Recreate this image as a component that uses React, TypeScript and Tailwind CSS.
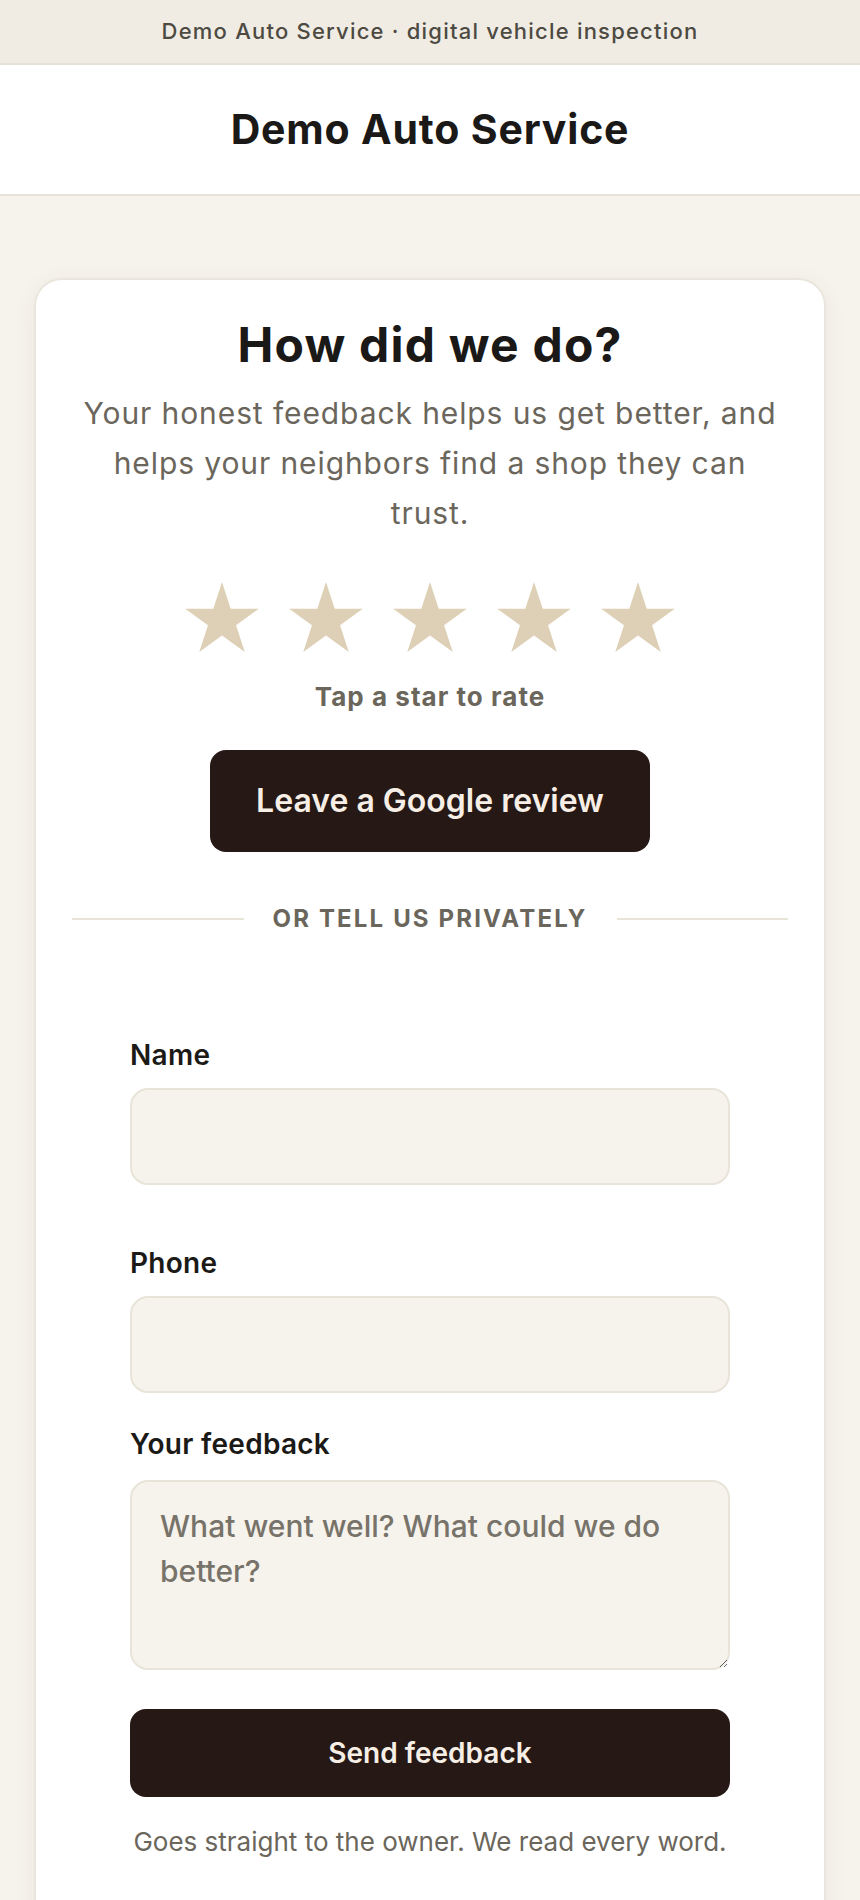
import { useState } from "react";

const STAR_POINTS =
  "50,0 61.8,36.33 100,36.33 69.1,58.78 80.9,95.1 50,72.65 19.1,95.1 30.9,58.78 0,36.33 38.2,36.33";

const Star = ({ filled }: { filled: boolean }) => (
  <svg viewBox="0 0 100 95.1" className="w-[74px] h-[70px]">
    <polygon points={STAR_POINTS} fill={filled ? "#c9a25a" : "#ddd0b6"} />
  </svg>
);

const Field = ({ label, className = "" }: { label: string; className?: string }) => (
  <div className={className}>
    <label className="block text-[28px] leading-[34px] font-semibold tracking-[0.01em] text-[#1c1a17]">
      {label}
    </label>
    <input className="mt-4 block w-full h-[97px] rounded-[18px] border-2 border-[#e9e4da] bg-[#f6f3ec] px-[30px] text-[28px] outline-none" />
  </div>
);

export default function App() {
  const [rating, setRating] = useState(0);

  return (
    <div className="min-h-screen bg-[#f6f3ec] font-['Inter','Noto_Sans',sans-serif]">
      <div className="h-[65px] flex items-center justify-center bg-[#f0ece4] border-b-2 border-[#e6e1d7]">
        <span className="text-[22px] font-medium tracking-[0.055em] text-[#4d4a42]">
          Demo Auto Service · digital vehicle inspection
        </span>
      </div>

      <header className="h-[131px] flex items-center justify-center bg-white border-b-2 border-[#e7e2d9]">
        <h1 className="text-[41px] font-bold tracking-[0.02em] text-[#1a1917]">
          Demo Auto Service
        </h1>
      </header>

      <main className="px-[34px] pt-[82px]">
        <div className="bg-white rounded-[28px] border-2 border-[#ebe6dd] shadow-[0_4px_24px_rgba(60,45,20,0.05)] px-[36px] pt-[36px] pb-[80px]">
          <h2 className="text-center text-[48px] leading-[58px] font-bold tracking-[0.025em] text-[#1a1917]">
            How did we do?
          </h2>
          <p className="mt-[14px] mx-auto max-w-[705px] text-center text-[30px] leading-[50px] tracking-[0.03em] text-[#6b665c]">
            Your honest feedback helps us get better, and helps your neighbors find a shop they can trust.
          </p>

          <div className="mt-[44px] flex justify-center gap-[30px]">
            {[1, 2, 3, 4, 5].map((n) => (
              <button key={n} type="button" onClick={() => setRating(n)}>
                <Star filled={n <= rating} />
              </button>
            ))}
          </div>
          <p className="mt-[29px] text-center text-[26px] leading-[32px] font-bold tracking-[0.04em] text-[#6b665c]">
            Tap a star to rate
          </p>

          <div className="mt-[37px] flex justify-center">
            <button
              type="button"
              className="w-[440px] h-[102px] rounded-[16px] bg-[#261814] text-[32px] font-semibold text-[#f7efe6]"
            >
              Leave a Google review
            </button>
          </div>

          <div className="mt-[53px] flex items-center gap-[29px]">
            <div className="flex-1 h-[2px] bg-[#e8e5d8]" />
            <span className="text-[24px] leading-[28px] font-bold tracking-[0.09em] text-[#6b665c]">
              OR TELL US PRIVATELY
            </span>
            <div className="flex-1 h-[2px] bg-[#e8e5d8]" />
          </div>

          <form className="mx-auto max-w-[600px] pt-[105px]" onSubmit={(e) => e.preventDefault()}>
            <Field label="Name" />
            <Field label="Phone" className="mt-[61px]" />

            <div className="mt-[34px]">
              <label className="block text-[28px] leading-[34px] font-semibold tracking-[0.01em] text-[#1c1a17]">
                Your feedback
              </label>
              <textarea
                placeholder="What went well? What could we do better?"
                className="mt-[19px] block w-full h-[190px] rounded-[18px] border-2 border-[#e9e4da] bg-[#f6f3ec] px-[28px] py-[22px] text-[30px] leading-[45px] font-medium text-[#1c1a17] placeholder:text-[#78736a] outline-none"
              />
            </div>

            <button
              type="submit"
              className="mt-[39px] w-full h-[88px] rounded-[16px] bg-[#261814] text-[28px] font-semibold text-[#f7efe6]"
            >
              Send feedback
            </button>
            <p className="mt-[29px] text-center text-[26px] leading-[32px] text-[#6b665c]">
              Goes straight to the owner. We read every word.
            </p>
          </form>
        </div>
      </main>
    </div>
  );
}
